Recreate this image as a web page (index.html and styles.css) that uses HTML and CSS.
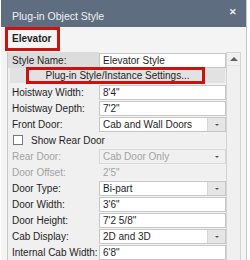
FILE: index.html
```html
<!DOCTYPE html>
<html>
<head>
<meta charset="utf-8">
<link rel="stylesheet" href="styles.css">
</head>
<body>
<div class="window">
  <div class="titlebar">
    <span class="title">Plug-in Object Style</span>
    <span class="close">&#x2715;</span>
  </div>
  <div class="body">
    <div class="header"><span class="hl-elev">Elevator</span></div>
    <div class="gridwrap">
      <div class="grid">
        <div class="row">
          <div class="label sel">Style Name:</div>
          <div class="value"><div class="box">Elevator Style</div></div>
        </div>
        <div class="row">
          <div class="btnrow"><span class="btn">Plug-in Style/Instance Settings...</span></div>
        </div>
        <div class="row">
          <div class="label">Hoistway Width:</div>
          <div class="value"><div class="box">8'4"</div></div>
        </div>
        <div class="row">
          <div class="label">Hoistway Depth:</div>
          <div class="value"><div class="box">7'2"</div></div>
        </div>
        <div class="row">
          <div class="label">Front Door:</div>
          <div class="value"><div class="box combo"><span class="txt">Cab and Wall Doors</span><span class="arrow"></span></div></div>
        </div>
        <div class="row">
          <div class="check"><span class="cb"></span><span>Show Rear Door</span></div>
        </div>
        <div class="row dis">
          <div class="label">Rear Door:</div>
          <div class="value"><div class="box combo"><span class="txt">Cab Door Only</span><span class="arrow"></span></div></div>
        </div>
        <div class="row dis">
          <div class="label">Door Offset:</div>
          <div class="value"><div class="box plain">2'5"</div></div>
        </div>
        <div class="row">
          <div class="label">Door Type:</div>
          <div class="value"><div class="box combo"><span class="txt">Bi-part</span><span class="arrow"></span></div></div>
        </div>
        <div class="row">
          <div class="label">Door Width:</div>
          <div class="value"><div class="box">3'6"</div></div>
        </div>
        <div class="row">
          <div class="label">Door Height:</div>
          <div class="value"><div class="box">7'2 5/8"</div></div>
        </div>
        <div class="row">
          <div class="label">Cab Display:</div>
          <div class="value"><div class="box combo"><span class="txt">2D and 3D</span><span class="arrow"></span></div></div>
        </div>
        <div class="row">
          <div class="label">Internal Cab Width:</div>
          <div class="value"><div class="box">6'8"</div></div>
        </div>
      </div>
      <div class="scrollbar"><div class="up"></div></div>
    </div>
  </div>
</div>
</body>
</html>
```

FILE: styles.css
```css
html, body {
  margin: 0;
  padding: 0;
  background: #ffffff;
}
body {
  width: 250px;
  height: 260px;
  overflow: hidden;
  font-family: "Liberation Sans", Arial, sans-serif;
  font-size: 10px;
  color: #1e1e1e;
}
.window {
  width: 245px;
  height: 260px;
  margin-left: 1px;
  border-right: 1px solid #c4c4c4;
  background: #f4f4f4;
  display: flex;
  flex-direction: column;
}
.titlebar {
  height: 27px;
  background: #5f6d80;
  color: #eef0f4;
  display: flex;
  align-items: center;
  justify-content: space-between;
  padding: 0 9px 0 11px;
  flex: none;
}
.title {
  font-size: 10.5px;
  padding-top: 5px;
}
.close {
  font-size: 9px;
  font-weight: bold;
  margin-top: -3px;
}
.body {
  flex: 1;
  display: flex;
  flex-direction: column;
  padding-left: 6px;
}
.header {
  height: 24px;
  display: flex;
  align-items: center;
  flex: none;
}
.hl-elev {
  font-weight: bold;
  padding: 2px 6px 2px 4px;
  margin-left: 1px;
  outline: 3px solid #cc1111;
  outline-offset: 0px;
  line-height: 14px;
}
.gridwrap {
  display: flex;
  align-items: flex-start;
  margin-top: 1px;
}
.grid {
  width: 218px;
  border-left: 1px solid #c8c8c8;
  display: flex;
  flex-direction: column;
}
.row {
  height: 16px;
  display: flex;
  align-items: stretch;
}
.label {
  width: 87px;
  padding-left: 4px;
  background: #f0f0f0;
  display: flex;
  align-items: center;
  white-space: nowrap;
}
.label.sel {
  background: #dcdcdc;
}
.value {
  flex: 1;
  display: flex;
  align-items: flex-start;
}
.box {
  height: 13px;
  flex: 1;
  margin-top: 1px;
  border: 1px solid #c6c6c6;
  background: #ffffff;
  padding-left: 3px;
  display: flex;
  align-items: center;
  line-height: 13px;
  white-space: nowrap;
  overflow: hidden;
}
.combo {
  padding-right: 0;
}
.combo .txt {
  flex: 1;
}
.arrow {
  width: 17px;
  height: 13px;
  background: #e6e6e6;
  border-left: 1px solid #d6d6d6;
  position: relative;
}
.arrow::after {
  content: "";
  position: absolute;
  left: 7px;
  top: 6px;
  border-left: 2px solid transparent;
  border-right: 2px solid transparent;
  border-top: 2px solid #555555;
}
.dis {
  color: #a2a2a2;
}
.dis .box {
  background: #f0f0f0;
  border-color: #d8d8d8;
}
.dis .arrow {
  background: #f0f0f0;
  border-left-color: #f0f0f0;
}
.dis .box.plain {
  border-color: #f0f0f0;
}
.btnrow {
  flex: 1;
  display: flex;
  padding: 0 1px 0 2px;
  background: #f0f0f0;
}
.btn {
  flex: 1;
  background: #e2e2e2;
  text-align: center;
  line-height: 15px;
  height: 15px;
  position: relative;
}
.btn::after {
  content: "";
  position: absolute;
  left: 16px;
  right: 20px;
  top: -1px;
  bottom: -1px;
  border: 3px solid #cc1111;
}
.check {
  flex: 1;
  background: #f0f0f0;
  display: flex;
  align-items: center;
  padding-left: 5px;
}
.cb {
  width: 8px;
  height: 8px;
  border: 1px solid #777777;
  background: #ffffff;
  margin-right: 8px;
}
.scrollbar {
  width: 13px;
  height: 210px;
  background: #f0f0f0;
  border: 1px solid #d4d4d4;
  margin-top: 0;
}
.up {
  height: 12px;
  position: relative;
  border-bottom: 1px solid #e4e4e4;
}
.up::after {
  content: "";
  position: absolute;
  left: 3px;
  top: 4px;
  border-left: 4px solid transparent;
  border-right: 4px solid transparent;
  border-bottom: 4px solid #606060;
}
```
